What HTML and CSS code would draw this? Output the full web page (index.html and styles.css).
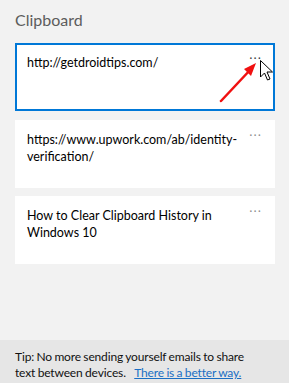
FILE: index.html
```html
<!DOCTYPE html>
<html lang="en">
<head>
  <meta charset="UTF-8" />
  <title>Clipboard</title>
  <link rel="stylesheet" href="styles.css">
</head>
<body>
  <div class="panel">
    <div class="main">
      <h1>Clipboard</h1>

      <div class="clip selected">
        <div class="clip-text">http://getdroidtips.com/</div>
        <span class="more">&middot;&middot;&middot;</span>
        <svg class="pointer" width="80" height="70" viewBox="0 0 80 70">
          <line x1="4" y1="56" x2="34" y2="24" stroke="#f01010" stroke-width="2.5" stroke-linecap="round" />
          <polygon points="39,18 27,24 34,31" fill="#f01010" />
          <path d="M43.5 15.5 L43.5 32 L47.5 28 L50.5 35 L53 34 L50 27 L55.5 27 Z" fill="#fff" stroke="#000" stroke-width="1" stroke-linejoin="round" />
        </svg>
      </div>

      <div class="clip">
        <div class="clip-text">https://www.upwork.com/ab/identity-verification/</div>
        <span class="more">&middot;&middot;&middot;</span>
      </div>

      <div class="clip">
        <div class="clip-text">How to Clear Clipboard History in Windows 10</div>
        <span class="more">&middot;&middot;&middot;</span>
      </div>
    </div>

    <div class="tip">
      <div class="tip-line">Tip: No more sending yourself emails to share</div>
      <div class="tip-line">text between devices. <a href="#">There is a better way.</a></div>
    </div>
  </div>
</body>
</html>
```

FILE: styles.css
```css
body {
  margin: 0;
  font-family: Lato, 'Noto Sans', sans-serif;
  background: #f2f2f2;
}

.panel {
  height: 383px;
  display: flex;
  flex-direction: column;
}

.main {
  flex: 1;
  padding: 0 14px 0 15px;
}

h1 {
  font-size: 16px;
  font-weight: normal;
  color: #5c5c5c;
  margin: 0;
  padding: 10px 0 0;
  height: 43px;
  box-sizing: border-box;
}

.clip {
  position: relative;
  display: flex;
  justify-content: space-between;
  align-items: flex-start;
  height: 68px;
  box-sizing: border-box;
  background: #fff;
  border: 2px solid #fff;
  padding: 9px 10px 0 10px;
  margin-bottom: 8px;
  font-size: 12.5px;
  line-height: 17px;
  color: #000;
}

.clip.selected {
  border-color: #0078d7;
  margin-bottom: 9px;
}

.clip-text {
  width: 222px;
  word-break: break-word;
}

.more {
  color: #8a8a8a;
  font-family: 'Noto Sans', sans-serif;
  font-size: 12px;
  letter-spacing: 1px;
  line-height: 10px;
  margin-right: 1px;
}

.selected .more {
  color: #333;
}

.pointer {
  position: absolute;
  left: 200px;
  top: 0;
}

.tip {
  background: #e6e6e6;
  height: 43px;
  box-sizing: border-box;
  padding: 9px 15px 0;
  font-size: 12px;
  letter-spacing: -0.15px;
  word-spacing: -0.5px;
  line-height: 16px;
  color: #111;
}

.tip-line {
  white-space: nowrap;
}

.tip a {
  color: #1a6fc4;
  margin-left: 6px;
}
```
